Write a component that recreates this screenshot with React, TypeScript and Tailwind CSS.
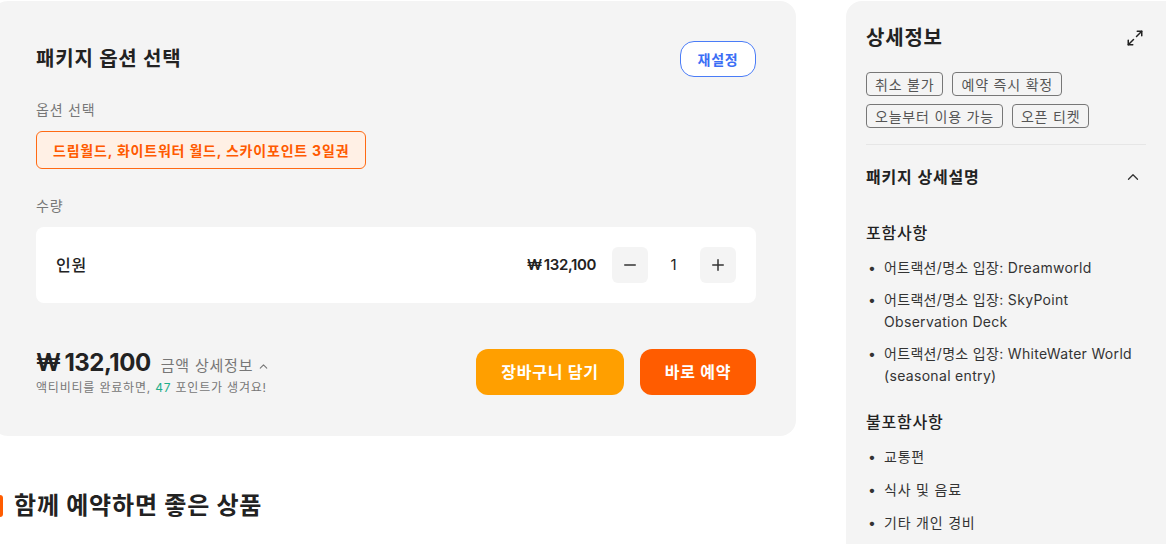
import { Maximize2, ChevronUp, Minus, Plus } from "lucide-react";

const font = {
  fontFamily: '"Inter", "Noto Sans CJK KR", sans-serif',
};

const tags = ["취소 불가", "예약 즉시 확정", "오늘부터 이용 가능", "오픈 티켓"];

const included = [
  "어트랙션/명소 입장: Dreamworld",
  "어트랙션/명소 입장: SkyPoint Observation Deck",
  "어트랙션/명소 입장: WhiteWater World (seasonal entry)",
];

const excluded = ["교통편", "식사 및 음료", "기타 개인 경비"];

function OptionPanel() {
  return (
    <div className="-ml-2 mt-px w-[804px] rounded-2xl bg-[#f4f4f4] pl-11 pr-10 pt-10 pb-10">
      <div className="flex items-center justify-between">
        <h2 className="text-[20px] font-bold text-[#222]">패키지 옵션 선택</h2>
        <button className="h-9 w-[76px] rounded-[14px] border border-[#4a7cf7] bg-white text-[14px] font-bold text-[#3b6ef5]">
          재설정
        </button>
      </div>

      <p className="mt-[22px] text-[14px] text-[#777]">옵션 선택</p>
      <div className="mt-[11px] inline-flex h-[38px] items-center rounded-md border border-[#ff6a13] bg-[#fff0e5] px-[16px] text-[14px] font-bold text-[#ff5a00]">
        드림월드, 화이트워터 월드, 스카이포인트 3일권
      </div>

      <p className="mt-[26px] text-[14px] text-[#777]">수량</p>
      <div className="mt-[11px] flex h-[76px] items-center justify-between rounded-lg bg-white pl-5 pr-5">
        <span className="text-[16px] font-medium text-[#222]">인원</span>
        <div className="flex items-center">
          <span className="text-[15px] font-semibold tracking-tight text-[#222]">
            ₩<span className="ml-0.5">132,100</span>
          </span>
          <button className="ml-4 flex h-9 w-9 items-center justify-center rounded-md bg-[#f4f4f4] text-[#333]">
            <Minus size={18} strokeWidth={2} />
          </button>
          <span className="w-[52px] text-center text-[15px] text-[#222]">1</span>
          <button className="flex h-9 w-9 items-center justify-center rounded-md bg-[#f4f4f4] text-[#333]">
            <Plus size={18} strokeWidth={2} />
          </button>
        </div>
      </div>

      <div className="mt-[46px] flex items-center justify-between">
        <div>
          <div className="flex items-baseline gap-2.5">
            <span className="text-[24px] font-bold leading-[28px] tracking-[-0.02em] text-[#222]">
              ₩<span className="ml-1">132,100</span>
            </span>
            <span className="flex items-center gap-1 text-[15px] text-[#777]">
              금액 상세정보 <ChevronUp size={13} strokeWidth={2} />
            </span>
          </div>
          <p className="mt-0.5 text-[12px] leading-4 text-[#777]">
            액티비티를 완료하면, <span className="text-[#1fae8a]">47</span> 포인트가 생겨요!
          </p>
        </div>
        <div className="flex gap-4">
          <button className="h-[46px] w-[148px] rounded-xl bg-[#ff9f00] text-[16px] font-bold text-white">
            장바구니 담기
          </button>
          <button className="h-[46px] w-[116px] rounded-xl bg-[#ff5c00] text-[16px] font-bold text-white">
            바로 예약
          </button>
        </div>
      </div>
    </div>
  );
}

function DetailPanel() {
  return (
    <div className="mt-px min-h-[560px] w-[320px] rounded-tl-2xl bg-[#f4f4f4] px-5 pt-[22px]">
      <div className="flex items-center justify-between">
        <h3 className="text-[20px] font-bold text-[#222]">상세정보</h3>
        <Maximize2 size={18} strokeWidth={2} className="mr-0.5 text-[#222]" />
      </div>

      <div className="mt-[19px] flex flex-wrap gap-x-[9px] gap-y-2">
        {tags.map((t) => (
          <span
            key={t}
            className="flex h-6 items-center rounded border border-[#777] px-2 text-[14px] text-[#555]"
          >
            {t}
          </span>
        ))}
      </div>

      <div className="mt-4 border-t border-[#e6e6e6]" />

      <div className="mt-[20px] flex items-center justify-between">
        <h4 className="text-[16px] font-semibold text-[#222]">패키지 상세설명</h4>
        <ChevronUp size={18} strokeWidth={1.75} className="mr-1 text-[#333]" />
      </div>

      <h5 className="mt-[32px] text-[16px] font-medium text-[#222]">포함사항</h5>
      <ul className="mt-[12px] flex flex-col gap-[10px] tracking-[0.02em]">
        {included.map((item) => (
          <li key={item} className="flex text-[14px] leading-[22px] text-[#333]">
            <span className="w-[18px] shrink-0 pl-[2px]">•</span>
            <span>{item}</span>
          </li>
        ))}
      </ul>

      <h5 className="mt-[23px] text-[16px] font-medium text-[#222]">불포함사항</h5>
      <ul className="mt-[12px] flex flex-col gap-[11px]">
        {excluded.map((item) => (
          <li key={item} className="flex text-[14px] leading-[22px] text-[#333]">
            <span className="w-[18px] shrink-0 pl-[2px]">•</span>
            <span>{item}</span>
          </li>
        ))}
      </ul>
    </div>
  );
}

export default function App() {
  return (
    <div
      className="h-[544px] w-[1166px] overflow-hidden bg-white tracking-[0.05em]"
      style={font}
    >
      <div className="flex items-start gap-[50px]">
        <div className="flex flex-col">
          <OptionPanel />
          <div className="mt-[52px] flex items-center gap-[11px]">
            <span className="h-[22px] w-[3px] rounded-r-sm bg-[#ff5c00]" />
            <h2 className="text-[24px] font-bold text-[#222]">함께 예약하면 좋은 상품</h2>
          </div>
        </div>
        <DetailPanel />
      </div>
    </div>
  );
}
